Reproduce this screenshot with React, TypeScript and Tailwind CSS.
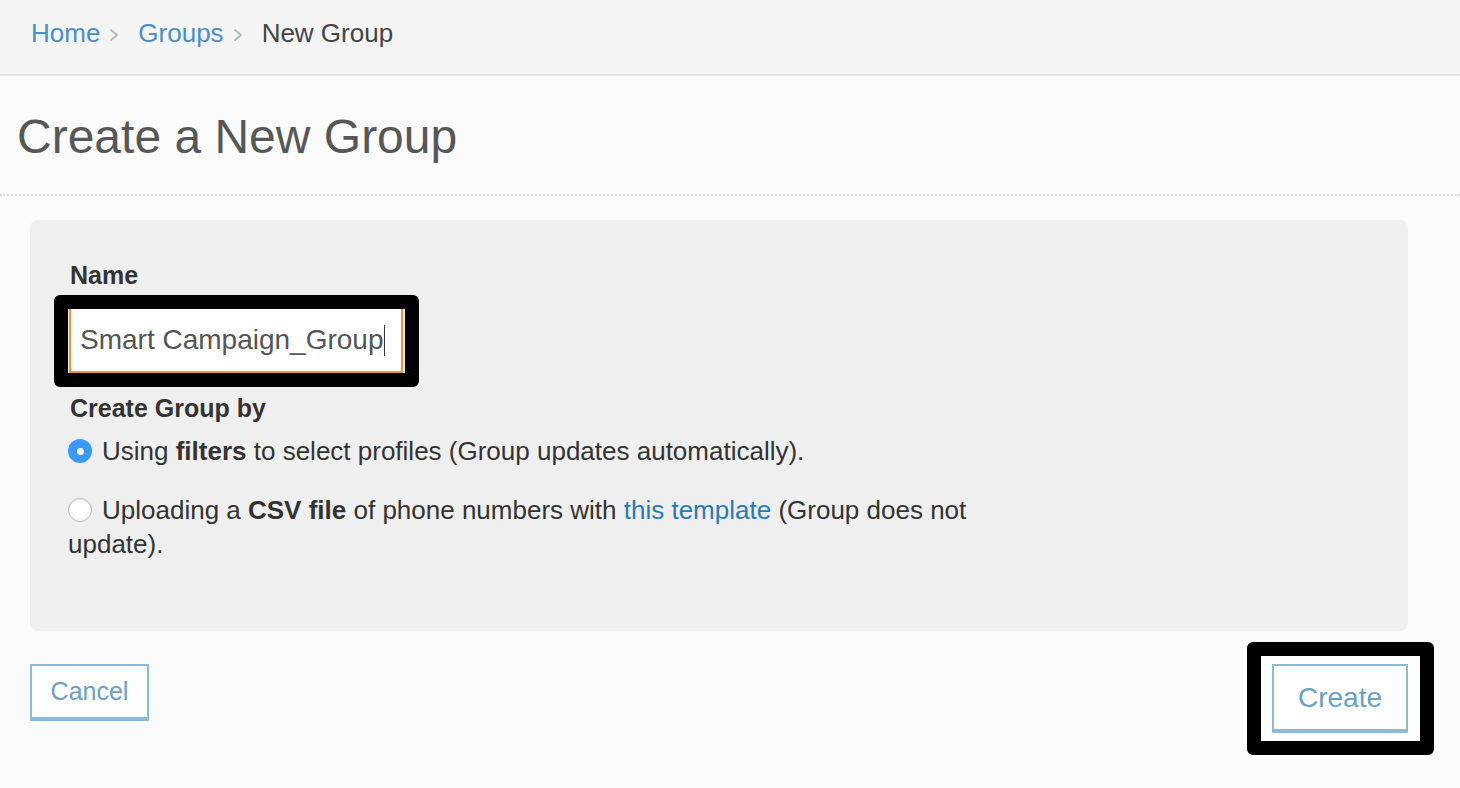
import React from 'react';

const font = "font-['Liberation_Sans','Helvetica_Neue',Arial,sans-serif]";

function Chevron() {
  return (
    <svg width="12" height="14" viewBox="0 0 12 14" className="ml-[8px] mr-[18px] mt-[4px]">
      <path d="M3 2 L9 7 L3 12" fill="none" stroke="#b4b8bd" strokeWidth="2" strokeLinecap="round" strokeLinejoin="round" />
    </svg>
  );
}

function Radio({ checked, children }: { checked?: boolean; children: React.ReactNode }) {
  return (
    <p className="text-[26px] leading-[34px] text-[#333] max-w-[920px]">
      {checked ? (
        <span className="inline-flex align-middle -mt-[4px] mr-[10px] w-[24px] h-[24px] rounded-full bg-[#3b99fc] items-center justify-center">
          <span className="w-[7px] h-[7px] rounded-full bg-white" />
        </span>
      ) : (
        <span className="inline-block align-middle -mt-[4px] mr-[10px] w-[24px] h-[24px] rounded-full bg-white border border-[#bdbdbd] shadow-[inset_0_1px_2px_rgba(0,0,0,0.08)]" />
      )}
      {children}
    </p>
  );
}

export default function App() {
  return (
    <div className={`min-h-screen bg-[#fbfbfb] ${font}`}>
      {/* Breadcrumb */}
      <header className="h-[76px] bg-[#f4f4f4] border-b-2 border-[#e4e4e4] pl-[31px] pt-[18px]">
        <nav className="flex items-center text-[26px] leading-[30px]">
          <a className="text-[#4a8ec6]">Home</a>
          <Chevron />
          <a className="text-[#4a8ec6]">Groups</a>
          <Chevron />
          <span className="text-[#444]">New Group</span>
        </nav>
      </header>

      {/* Title */}
      <div className="pl-[17px] pt-[33px] pb-[29px] border-b-2 border-dotted border-[#d9d9d9]">
        <h1 className="text-[48px] leading-[56px] text-[#575757] font-normal">Create a New Group</h1>
      </div>

      {/* Form panel */}
      <div className="ml-[30px] mr-[52px] mt-[24px] bg-[#efefef] rounded-[8px] pl-[38px] pt-[40px] pb-[70px]">
        <label className="block ml-[2px] text-[25px] leading-[30px] font-bold text-[#333]">Name</label>
        <div className="relative mt-[19px] w-[336px]">
          <div className="absolute -left-[14px] -right-[15px] -top-[14px] -bottom-[14px] border-[14px] border-black rounded-[6px]" />
          <div className="h-[64px] bg-white border-x-2 border-b-2 border-[#f0963a] border-t-0 mx-[1px] pl-[9px] flex items-center">
            <span className="text-[28px] text-[#555]">Smart Campaign_Group</span>
            <span className="w-[1px] h-[31px] bg-[#333] ml-[1px]" />
          </div>
        </div>

        <label className="block ml-[2px] mt-[20px] text-[25px] leading-[30px] font-bold text-[#333]">Create Group by</label>
        <div className="mt-[11px]">
          <Radio checked>
            Using <b>filters</b> to select profiles (Group updates automatically).
          </Radio>
        </div>
        <div className="mt-[25px]">
          <Radio>
            Uploading a <b>CSV file</b> of phone numbers with <a className="text-[#2a7ab8]">this template</a> (Group does not update).
          </Radio>
        </div>
      </div>

      {/* Actions */}
      <div className="ml-[30px] mr-[52px] mt-[33px] flex justify-between items-start">
        <button className="w-[119px] h-[57px] bg-white border-2 border-b-4 border-[#8cbad9] text-[25px] text-[#6a9fc6]">
          Cancel
        </button>
        <div className="relative">
          <div className="absolute -left-[25px] -right-[26px] -top-[22px] -bottom-[22px] bg-white border-[14px] border-black rounded-[6px]" />
          <button className="relative w-[136px] h-[69px] bg-white border-2 border-b-4 border-[#8cbad9] text-[28px] text-[#6a9fc6]">
            Create
          </button>
        </div>
      </div>
    </div>
  );
}
